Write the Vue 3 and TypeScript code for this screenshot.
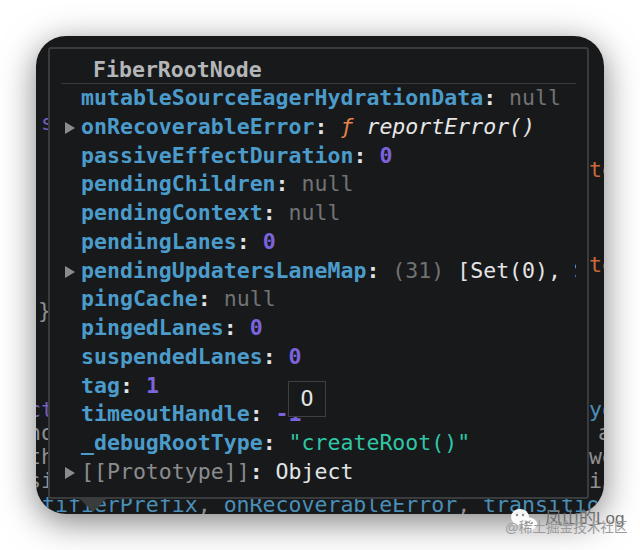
<script setup lang="ts">
interface Part { t: string; c: string }
interface Row { arrow?: boolean; parts: Part[] }
const k = 'key', n = 'nul', p = 'pun', v = 'num'
const rows: Row[] = [
  { parts: [{ t: 'mutableSourceEagerHydrationData', c: k }, { t: ': ', c: p }, { t: 'null', c: n }] },
  { arrow: true, parts: [{ t: 'onRecoverableError', c: k }, { t: ': ', c: p }, { t: 'ƒ', c: 'fn' }, { t: ' reportError()', c: 'it' }] },
  { parts: [{ t: 'passiveEffectDuration', c: k }, { t: ': ', c: p }, { t: '0', c: v }] },
  { parts: [{ t: 'pendingChildren', c: k }, { t: ': ', c: p }, { t: 'null', c: n }] },
  { parts: [{ t: 'pendingContext', c: k }, { t: ': ', c: p }, { t: 'null', c: n }] },
  { parts: [{ t: 'pendingLanes', c: k }, { t: ': ', c: p }, { t: '0', c: v }] },
  { arrow: true, parts: [{ t: 'pendingUpdatersLaneMap', c: k }, { t: ': ', c: p }, { t: '(31)', c: n }, { t: ' [Set(0), Set', c: 'pl' }] },
  { parts: [{ t: 'pingCache', c: k }, { t: ': ', c: p }, { t: 'null', c: n }] },
  { parts: [{ t: 'pingedLanes', c: k }, { t: ': ', c: p }, { t: '0', c: v }] },
  { parts: [{ t: 'suspendedLanes', c: k }, { t: ': ', c: p }, { t: '0', c: v }] },
  { parts: [{ t: 'tag', c: k }, { t: ': ', c: p }, { t: '1', c: v }] },
  { parts: [{ t: 'timeoutHandle', c: k }, { t: ': ', c: p }, { t: '-1', c: v }] },
  { parts: [{ t: '_debugRootType', c: k }, { t: ': ', c: p }, { t: '"createRoot()"', c: 'str' }] },
  { arrow: true, parts: [{ t: '[[Prototype]]', c: 'proto' }, { t: ': ', c: p }, { t: 'Object', c: 'pl' }] },
]
const bits = [
  { t: 's', x: 5, y: 73, c: 'b-pur' },
  { t: 'te', x: 553, y: 120, c: 'b-org' },
  { t: 'te', x: 553, y: 215, c: 'b-org' },
  { t: '}', x: 2, y: 261, c: 'b-gry' },
  { t: 'ct', x: -8, y: 360, c: 'b-pur' },
  { t: 'no', x: -8, y: 383, c: 'b-gry' },
  { t: 'th', x: -8, y: 407, c: 'b-gry' },
  { t: 'si', x: -8, y: 431, c: 'b-gry' },
  { t: 'yo', x: 553, y: 360, c: 'b-blu' },
  { t: 'a', x: 562, y: 383, c: 'b-gry' },
  { t: 'we', x: 553, y: 407, c: 'b-gry' },
  { t: 'is', x: 553, y: 431, c: 'b-gry' },
]
</script>

<template>
  <main class="page">
    <section class="window">
      <span
        v-for="b in bits"
        :key="b.t + b.y"
        class="bit"
        :class="b.c"
        :style="{ left: b.x + 'px', top: b.y + 'px' }"
      >{{ b.t }}</span>
      <div class="code-line"><span class="b-blu">tifierPrefix</span><span class="b-gry">, </span><span class="b-blu">onRecoverableError</span><span class="b-gry">, </span><span class="b-blu">transitio</span></div>
      <span class="caret"></span>

      <div class="popover">
        <h1 class="title">FiberRootNode</h1>
        <ul class="rows">
          <li v-for="(r, i) in rows" :key="i" class="row">
            <svg v-if="r.arrow" class="arrow" width="10" height="12" viewBox="0 0 10 12"><path d="M0 0L10 6L0 12Z" /></svg>
            <span v-for="(s, j) in r.parts" :key="j" :class="s.c">{{ s.t }}</span>
          </li>
        </ul>
      </div>

      <div class="tip">O</div>
    </section>

    <div class="mark">
      <svg class="wechat" width="30" height="26" viewBox="0 0 30 26">
        <ellipse cx="10" cy="9" rx="9" ry="8" fill="#fff" />
        <path d="M4 14L3 19L9 16Z" fill="#fff" />
        <ellipse cx="19" cy="16" rx="8" ry="6.5" fill="#fff" />
        <circle cx="7" cy="7" r="1.2" fill="#8a8a8a" />
        <circle cx="13" cy="7" r="1.2" fill="#8a8a8a" />
        <circle cx="16" cy="15" r="1" fill="#8a8a8a" />
        <circle cx="22" cy="15" r="1" fill="#8a8a8a" />
      </svg>
      <span class="mark-a">凤山的Log</span>
      <span class="mark-b">@稀土掘金技术社区</span>
    </div>
  </main>
</template>

<style>
html, body { margin: 0; background: #fff; }
</style>

<style scoped>
.page {
  position: relative;
  width: 640px;
  height: 550px;
  padding: 36px;
  box-sizing: border-box;
  overflow: hidden;
  background: #fff;
  font-family: "DejaVu Sans Mono", "Liberation Mono", monospace;
}
.window {
  position: relative;
  width: 568px;
  height: 478px;
  border-radius: 30px;
  background: #18191b;
  overflow: hidden;
}
.page::before {
  content: "";
  position: absolute;
  left: 36px;
  top: 36px;
  width: 568px;
  height: 478px;
  border-radius: 30px;
  box-shadow: 0 8px 34px rgba(0, 0, 0, 0.5);
}
.bit, .code-line {
  position: absolute;
  font-size: 21.55px;
  line-height: 28px;
  white-space: pre;
}
.code-line { left: 6px; top: 455px; }
.b-pur { color: #6f5fb8; }
.b-org { color: #c9693a; }
.b-gry { color: #8f9091; }
.b-blu { color: #4a8fb8; }
.caret {
  position: absolute;
  left: 44px;
  top: 463px;
  width: 0;
  height: 0;
  border-left: 13px solid transparent;
  border-right: 13px solid transparent;
  border-top: 13px solid #3b3c3e;
}
.popover {
  position: absolute;
  left: 12px;
  top: 11px;
  width: 541px;
  height: 452px;
  box-sizing: border-box;
  border: 2px solid #3a3b3d;
  border-radius: 3px;
  background: #18191b;
  padding: 8px 11px 0 11px;
  overflow: hidden;
}
.title {
  margin: 0;
  height: 26px;
  padding-left: 32px;
  border-bottom: 1px solid #38393b;
  font-size: 21.55px;
  line-height: 26px;
  font-weight: 700;
  color: #b4b6b8;
}
.rows {
  list-style: none;
  margin: 0;
  padding: 0;
  overflow: hidden;
}
.row {
  position: relative;
  height: 28.77px;
  line-height: 28.77px;
  padding-left: 20px;
  font-size: 21.55px;
  white-space: pre;
}
.arrow {
  position: absolute;
  left: 4px;
  top: 9px;
  fill: #8b8c8d;
}
.key { color: #4b9ccb; font-weight: 700; }
.pun { color: #e3e4e5; font-weight: 700; }
.nul { color: #717274; }
.num { color: #7a63dc; font-weight: 700; }
.fn { color: #e8834a; font-style: italic; }
.it { color: #e6e6e6; font-style: italic; }
.pl { color: #e3e4e5; }
.str { color: #2fc6a5; }
.proto { color: #8b8c8d; }
.tip {
  position: absolute;
  left: 252px;
  top: 345px;
  width: 38px;
  height: 36px;
  box-sizing: border-box;
  border: 1px solid #3f4042;
  background: #18191b;
  color: #e3e4e5;
  font-size: 21.55px;
  line-height: 34px;
  text-align: center;
}
.mark {
  position: absolute;
  left: 505px;
  top: 505px;
  width: 130px;
  height: 40px;
}
.wechat { position: absolute; left: 5px; top: 3px; opacity: 0.95; }
.mark-a {
  position: absolute;
  left: 40px;
  top: 2px;
  font-family: "Liberation Sans", "Noto Sans CJK SC", sans-serif;
  font-size: 17px;
  line-height: 24px;
  color: #6f6f6f;
}
.mark-b {
  position: absolute;
  left: 0;
  top: 13px;
  font-family: "Liberation Sans", "Noto Sans CJK SC", sans-serif;
  font-size: 13.6px;
  line-height: 20px;
  color: #9a9a9a;
  white-space: nowrap;
}
</style>
